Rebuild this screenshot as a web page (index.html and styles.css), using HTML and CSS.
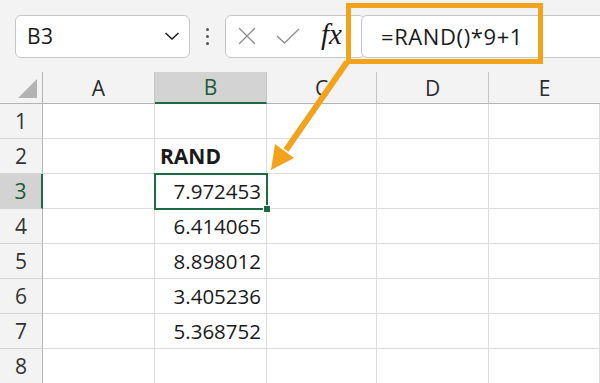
FILE: index.html
```html
<!DOCTYPE html>
<html lang="en">
    <head>
        <meta charset="UTF-8">
        <title>RAND formula</title>
        <link rel="stylesheet" href="styles.css">
    </head>

    <body class="sheet">
        <div class="toolbar">
            <div class="toolbar__namebox">
                <span class="toolbar__namebox__value">B3</span>
                <svg class="toolbar__namebox__chevron" width="16" height="10" viewBox="0 0 16 10"><path d="M1.5 2 L8 8 L14.5 2" fill="none" stroke="#222" stroke-width="1.6"/></svg>
            </div>
            <div class="toolbar__dots"><i></i><i></i><i></i></div>
            <div class="toolbar__buttons">
                <svg width="20" height="20" viewBox="0 0 20 20"><path d="M2 2 L18 18 M18 2 L2 18" stroke="#8d8d8d" stroke-width="1.3"/></svg>
                <svg class="toolbar__buttons__enter" width="24" height="16" viewBox="0 0 24 16"><path d="M1 8 L8.5 15 L23 1" fill="none" stroke="#8d8d8d" stroke-width="1.3"/></svg>
                <span class="toolbar__buttons__fx">fx</span>
            </div>
            <div class="toolbar__formula">=RAND()*9+1</div>
        </div>

        <div class="grid">
            <div class="grid__corner"><span class="grid__corner__triangle"></span></div>
            <div class="grid__colhead">A</div>
            <div class="grid__colhead grid__colhead--active">B</div>
            <div class="grid__colhead">C</div>
            <div class="grid__colhead">D</div>
            <div class="grid__colhead grid__colhead--last">E</div>

            <div class="grid__rowhead">1</div>
            <div class="grid__cell"></div><div class="grid__cell"></div><div class="grid__cell"></div><div class="grid__cell"></div><div class="grid__cell"></div>

            <div class="grid__rowhead">2</div>
            <div class="grid__cell"></div><div class="grid__cell grid__cell--label">RAND</div><div class="grid__cell"></div><div class="grid__cell"></div><div class="grid__cell"></div>

            <div class="grid__rowhead grid__rowhead--active">3</div>
            <div class="grid__cell"></div><div class="grid__cell grid__cell--number grid__cell--selected">7.972453</div><div class="grid__cell"></div><div class="grid__cell"></div><div class="grid__cell"></div>

            <div class="grid__rowhead">4</div>
            <div class="grid__cell"></div><div class="grid__cell grid__cell--number">6.414065</div><div class="grid__cell"></div><div class="grid__cell"></div><div class="grid__cell"></div>

            <div class="grid__rowhead">5</div>
            <div class="grid__cell"></div><div class="grid__cell grid__cell--number">8.898012</div><div class="grid__cell"></div><div class="grid__cell"></div><div class="grid__cell"></div>

            <div class="grid__rowhead">6</div>
            <div class="grid__cell"></div><div class="grid__cell grid__cell--number">3.405236</div><div class="grid__cell"></div><div class="grid__cell"></div><div class="grid__cell"></div>

            <div class="grid__rowhead">7</div>
            <div class="grid__cell"></div><div class="grid__cell grid__cell--number">5.368752</div><div class="grid__cell"></div><div class="grid__cell"></div><div class="grid__cell"></div>

            <div class="grid__rowhead">8</div>
            <div class="grid__cell"></div><div class="grid__cell"></div><div class="grid__cell"></div><div class="grid__cell"></div><div class="grid__cell"></div>
        </div>

        <!-- callout drawn over the formula bar -->
        <div class="callout"></div>
        <svg class="callout__arrow" width="600" height="383" viewBox="0 0 600 383">
            <line x1="347" y1="62" x2="286" y2="150" stroke="#f3a31b" stroke-width="6"/>
            <polygon points="271,170 294,158 275,144" fill="#f3a31b"/>
        </svg>
    </body>
</html>
```

FILE: styles.css
```css
html,
body {
    margin: 0;
    padding: 0;
}

:root {
    --color-green: #1d6b42;
    --color-orange: #f3a31b;
    --color-grid: #dcdcdc;
    --color-head: #f3f3f3;
    --color-head-line: #b4b4b4;
}

.sheet {
    background-color: #ffffff;
    color: #1a1a1a;
    font-family: "Open Sans", "Noto Sans", sans-serif;
    height: 383px;
    overflow: hidden;
    position: relative;
    width: 600px;
}

.toolbar {
    align-items: center;
    background-color: var(--color-head);
    box-sizing: border-box;
    display: flex;
    height: 72px;
    padding: 0 0 0 15px;
}

.toolbar__namebox {
    align-items: center;
    background-color: #ffffff;
    border: 1px solid #c6c6c6;
    border-radius: 6px;
    box-sizing: border-box;
    display: flex;
    height: 43px;
    justify-content: space-between;
    padding: 0 9px 0 11px;
    width: 175px;
}

.toolbar__namebox__value {
    font-size: 21px;
    letter-spacing: 0.5px;
}

.toolbar__dots {
    display: flex;
    flex-direction: column;
    gap: 4px;
    margin: 0 16px 0 16px;
}

.toolbar__dots i {
    background-color: #555555;
    border-radius: 50%;
    height: 3px;
    width: 3px;
}

.toolbar__buttons {
    align-items: center;
    background-color: #ffffff;
    border: 1px solid #c6c6c6;
    border-radius: 6px;
    box-sizing: border-box;
    display: flex;
    height: 43px;
    padding: 0 0 0 11px;
    width: 140px;
}

.toolbar__buttons__enter {
    margin: 0 0 0 19px;
}

.toolbar__buttons__fx {
    font-family: "Liberation Serif", serif;
    font-size: 29px;
    font-style: italic;
    margin: -4px 0 0 21px;
}

.toolbar__formula {
    align-items: center;
    background-color: #ffffff;
    border: 1px solid #c6c6c6;
    border-radius: 6px;
    box-sizing: border-box;
    display: flex;
    flex: 1;
    font-size: 22px;
    height: 43px;
    letter-spacing: 0.6px;
    margin: 0 -10px 0 -4px;
    padding: 0 0 0 19px;
}

.grid {
    display: grid;
    grid-template-columns: 43px 112px 112px 110px 112px 111px;
    grid-template-rows: 32px repeat(8, 35px);
}

.grid__corner {
    background-color: var(--color-head);
    border-bottom: 1px solid var(--color-head-line);
    border-right: 1px solid var(--color-head-line);
    position: relative;
}

.grid__corner__triangle {
    border-bottom: 19px solid #b3b3b3;
    border-left: 19px solid transparent;
    bottom: 5px;
    position: absolute;
    right: 5px;
}

.grid__colhead {
    align-items: center;
    background-color: var(--color-head);
    border-bottom: 1px solid var(--color-head-line);
    border-right: 1px solid #c4c4c4;
    color: #2a2a2a;
    display: flex;
    font-size: 21px;
    justify-content: center;
}

.grid__colhead--active {
    background-color: #d3d3d3;
    border-bottom: 2px solid var(--color-green);
    color: #1f5a3a;
}

.grid__colhead--last {
    border-right: none;
}

.grid__rowhead {
    align-items: center;
    background-color: var(--color-head);
    border-bottom: 1px solid #d4d4d4;
    border-right: 1px solid var(--color-head-line);
    color: #333333;
    display: flex;
    font-size: 21px;
    justify-content: center;
}

.grid__rowhead--active {
    background-color: #d3d3d3;
    border-right: 2px solid var(--color-green);
    color: #1f5a3a;
}

.grid__cell {
    align-items: center;
    border-bottom: 1px solid var(--color-grid);
    border-right: 1px solid var(--color-grid);
    box-sizing: border-box;
    display: flex;
    font-size: 20.5px;
    padding: 0 5px;
}

.grid__cell--label {
    font-size: 21px;
    font-weight: 700;
}

.grid__cell--number {
    justify-content: flex-end;
}

.grid__cell--selected {
    outline: 2px solid var(--color-green);
    outline-offset: -1px;
    position: relative;
}

.grid__cell--selected::after {
    background-color: var(--color-green);
    border: 1px solid #ffffff;
    bottom: -5px;
    content: "";
    height: 6px;
    position: absolute;
    right: -5px;
    width: 6px;
}

.callout {
    border: 5px solid var(--color-orange);
    box-sizing: border-box;
    height: 61px;
    left: 346px;
    position: absolute;
    top: 3px;
    width: 197px;
}

.callout__arrow {
    left: 0;
    pointer-events: none;
    position: absolute;
    top: 0;
}
```
